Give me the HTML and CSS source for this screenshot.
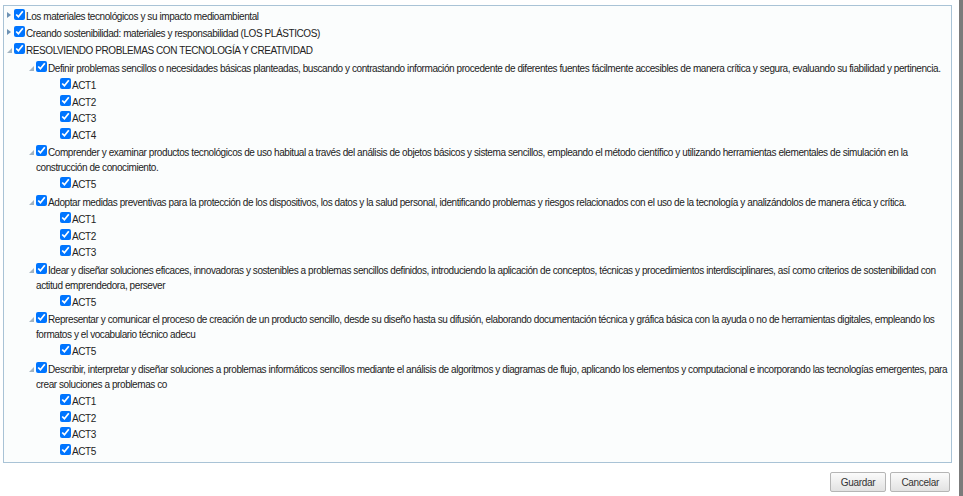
FILE: index.html
```html
<!DOCTYPE html>
<html lang="es">
  <head>
    <meta charset="UTF-8" />
    <title>Criterios</title>
    <link rel="stylesheet" href="styles.css">
  </head>
  <body>
    <div class="page">
      <div class="panel">
        <ul class="tree level0">
          <li>
            <div class="row"><span class="toggle closed"><svg width="4" height="6" viewBox="0 0 4 6"><path d="M0 0 L4 3 L0 6 Z" /></svg></span><input type="checkbox" checked>Los materiales tecnológicos y su impacto medioambiental</div>
          </li>
          <li>
            <div class="row"><span class="toggle closed"><svg width="4" height="6" viewBox="0 0 4 6"><path d="M0 0 L4 3 L0 6 Z" /></svg></span><input type="checkbox" checked>Creando sostenibilidad: materiales y responsabilidad (LOS PLÁSTICOS)</div>
          </li>
          <li>
            <div class="row"><span class="toggle open"><svg width="5" height="5" viewBox="0 0 5 5"><path d="M5 0 L5 5 L0 5 Z" /></svg></span><input type="checkbox" checked>RESOLVIENDO PROBLEMAS CON TECNOLOGÍA Y CREATIVIDAD</div>
            <ul class="tree level1">
              <li>
                <div class="row"><span class="toggle open"><svg width="5" height="5" viewBox="0 0 5 5"><path d="M5 0 L5 5 L0 5 Z" /></svg></span><input type="checkbox" checked>Definir problemas sencillos o necesidades básicas planteadas, buscando y contrastando información procedente de diferentes fuentes fácilmente accesibles de manera crítica y segura, evaluando su fiabilidad y pertinencia.</div>
                <ul class="tree level2">
                  <li><div class="row"><input type="checkbox" checked>ACT1</div></li>
                  <li><div class="row"><input type="checkbox" checked>ACT2</div></li>
                  <li><div class="row"><input type="checkbox" checked>ACT3</div></li>
                  <li><div class="row"><input type="checkbox" checked>ACT4</div></li>
                </ul>
              </li>
              <li>
                <div class="row"><span class="toggle open"><svg width="5" height="5" viewBox="0 0 5 5"><path d="M5 0 L5 5 L0 5 Z" /></svg></span><input type="checkbox" checked>Comprender y examinar productos tecnológicos de uso habitual a través del análisis de objetos básicos y sistema sencillos, empleando el método científico y utilizando herramientas elementales de simulación en la construcción de conocimiento.</div>
                <ul class="tree level2">
                  <li><div class="row"><input type="checkbox" checked>ACT5</div></li>
                </ul>
              </li>
              <li>
                <div class="row"><span class="toggle open"><svg width="5" height="5" viewBox="0 0 5 5"><path d="M5 0 L5 5 L0 5 Z" /></svg></span><input type="checkbox" checked>Adoptar medidas preventivas para la protección de los dispositivos, los datos y la salud personal, identificando problemas y riesgos relacionados con el uso de la tecnología y analizándolos de manera ética y crítica.</div>
                <ul class="tree level2">
                  <li><div class="row"><input type="checkbox" checked>ACT1</div></li>
                  <li><div class="row"><input type="checkbox" checked>ACT2</div></li>
                  <li><div class="row"><input type="checkbox" checked>ACT3</div></li>
                </ul>
              </li>
              <li>
                <div class="row"><span class="toggle open"><svg width="5" height="5" viewBox="0 0 5 5"><path d="M5 0 L5 5 L0 5 Z" /></svg></span><input type="checkbox" checked>Idear y diseñar soluciones eficaces, innovadoras y sostenibles a problemas sencillos definidos, introduciendo la aplicación de conceptos, técnicas y procedimientos interdisciplinares, así como criterios de sostenibilidad con actitud emprendedora, persever</div>
                <ul class="tree level2">
                  <li><div class="row"><input type="checkbox" checked>ACT5</div></li>
                </ul>
              </li>
              <li>
                <div class="row"><span class="toggle open"><svg width="5" height="5" viewBox="0 0 5 5"><path d="M5 0 L5 5 L0 5 Z" /></svg></span><input type="checkbox" checked>Representar y comunicar el proceso de creación de un producto sencillo, desde su diseño hasta su difusión, elaborando documentación técnica y gráfica básica con la ayuda o no de herramientas digitales, empleando los formatos y el vocabulario técnico adecu</div>
                <ul class="tree level2">
                  <li><div class="row"><input type="checkbox" checked>ACT5</div></li>
                </ul>
              </li>
              <li>
                <div class="row"><span class="toggle open"><svg width="5" height="5" viewBox="0 0 5 5"><path d="M5 0 L5 5 L0 5 Z" /></svg></span><input type="checkbox" checked>Describir, interpretar y diseñar soluciones a problemas informáticos sencillos mediante el análisis de algoritmos y diagramas de flujo, aplicando los elementos y computacional e incorporando las tecnologías emergentes, para crear soluciones a problemas co</div>
                <ul class="tree level2">
                  <li><div class="row"><input type="checkbox" checked>ACT1</div></li>
                  <li><div class="row"><input type="checkbox" checked>ACT2</div></li>
                  <li><div class="row"><input type="checkbox" checked>ACT3</div></li>
                  <li><div class="row"><input type="checkbox" checked>ACT5</div></li>
                </ul>
              </li>
            </ul>
          </li>
        </ul>
      </div>
      <div class="buttons">
        <button>Guardar</button>
        <button>Cancelar</button>
      </div>
    </div>
    <div class="strip"></div>
  </body>
</html>
```

FILE: styles.css
```css
* {
  margin: 0;
  padding: 0;
  box-sizing: border-box;
}

body {
  background-color: #fff;
  font-family: "Liberation Sans", Arial, sans-serif;
  color: #222;
  height: 496px;
  display: flex;
  overflow: hidden;
}

.page {
  flex: 1;
  padding: 5px 7px 0 3px;
}

.strip {
  width: 4px;
  background-color: #7b7b7b;
}

.panel {
  height: 458px;
  border: 1px solid #a9c3d6;
  background-color: #fbfdfd;
  padding: 2px 0 0 0;
  overflow: hidden;
}

.tree {
  list-style: none;
  font-size: 10px;
  letter-spacing: -0.42px;
  line-height: 15px;
}

.level0 {
  padding-left: 10px;
}

.level1 {
  padding-left: 22px;
}

.level2 {
  padding-left: 24px;
}

.row {
  padding: 1px 0;
}

.level1 > li > .row {
  padding-top: 2px;
}

.level2 .row {
  padding: 1px 0 0.6px;
}

.row input {
  width: 11px;
  height: 11px;
  margin: 0 1px 1px 0;
  vertical-align: baseline;
}

.toggle {
  display: inline-block;
  width: 7px;
  margin-left: -7px;
}

.toggle svg {
  display: block;
}

.toggle.closed svg {
  fill: #6d92b4;
  margin: 0 0 2px 0;
}

.toggle.open svg {
  fill: #a3b3c0;
  margin: 0 0 1px 0;
}

.buttons {
  display: flex;
  justify-content: flex-end;
  gap: 4px;
  margin-top: 9px;
  padding-right: 2px;
}

.buttons button {
  font-family: "Liberation Sans", Arial, sans-serif;
  font-size: 10px;
  letter-spacing: -0.3px;
  color: #333;
  height: 20px;
  padding: 0 10px;
  border: 1px solid #b5b5b5;
  border-radius: 2px;
  background: linear-gradient(#fbfbfb, #e2e2e2);
  cursor: pointer;
}
```
